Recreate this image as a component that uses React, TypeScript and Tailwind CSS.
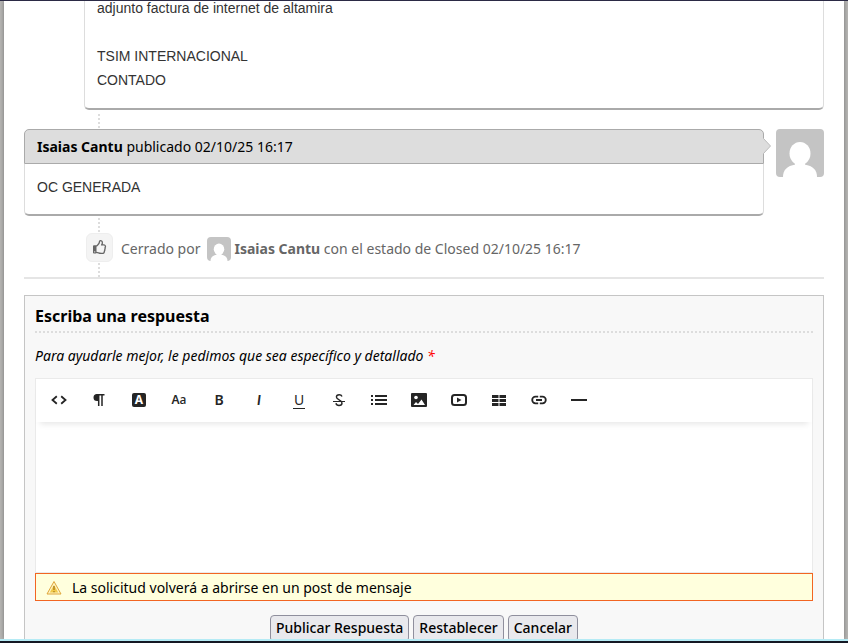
import type { ReactNode } from "react";
import { FaRegThumbsUp } from "react-icons/fa";

function Avatar({ className }: { className: string }) {
  return (
    <svg viewBox="0 0 48 48" className={className} aria-hidden="true">
      <rect width="48" height="48" fill="#c4c4c4" />
      <ellipse cx="24" cy="24.5" rx="10.5" ry="11.5" fill="#fff" />
      <path d="M7 48c0-7 4-11 12.500-12.500h9C37 37 41 41 41 48z" fill="#fff" />
      <rect x="19" y="33" width="10" height="5" fill="#fff" />
    </svg>
  );
}

function Connector() {
  return <div className="ml-[74px] h-[14px] w-0 border-l-2 border-dotted border-[#dddddd]" />;
}

const Svg = ({ children }: { children: ReactNode }) => (
  <svg viewBox="0 0 16 16" className="size-4" fill="none" stroke="currentColor" strokeWidth="2">
    {children}
  </svg>
);

const tools: { label: string; icon: ReactNode }[] = [
  { label: "HTML", icon: <Svg><path d="M5.800 4.300L1.500 8l4.300 3.700M10.200 4.300L14.500 8l-4.300 3.700" strokeWidth="1.800" /></Svg> },
  {
    label: "Formato",
    icon: (
      <Svg>
        <path d="M8 2H6a3.500 3.500 0 0 0 0 7h2z" fill="currentColor" stroke="none" />
        <path d="M5.500 2.700H13.500M7.700 2v12M11 2v12" strokeWidth="1.500" />
      </Svg>
    ),
  },
  {
    label: "Color",
    icon: <span className="flex size-[14px] items-center justify-center rounded-xs bg-[#252525] text-xs leading-none font-bold text-white">A</span>,
  },
  { label: "Fuente", icon: <span className="text-xs font-semibold">A<span className="font-medium">a</span></span> },
  { label: "Negrita", icon: <span className="text-sm font-semibold">B</span> },
  { label: "Cursiva", icon: <span className="font-['Lato',sans-serif] text-sm font-bold italic">I</span> },
  { label: "Subrayado", icon: <span className="border-b border-current px-px text-sm leading-4">U</span> },
  {
    label: "Tachado",
    icon: (
      <Svg>
        <path d="M11 4.500C10.500 3.200 9.500 2.700 8.200 2.700c-1.700 0-2.800.9-2.800 2.300 0 3.200 5.600 2.500 5.600 6 0 1.500-1.200 2.500-3 2.500-1.600 0-2.700-.7-3.100-2.200" strokeWidth="1.400" />
        <path d="M2 9.500h12" strokeWidth="1" />
      </Svg>
    ),
  },
  { label: "Lista", icon: <Svg><path d="M0 4h2M0 8h2M0 12h2M4 4h12M4 8h12M4 12h12" /></Svg> },
  {
    label: "Imagen",
    icon: (
      <Svg>
        <rect x="0" y="1" width="16" height="14" rx="1" fill="currentColor" stroke="none" />
        <circle cx="5" cy="5.500" r="1.800" fill="#fff" stroke="none" />
        <path d="M2.500 13l2.500-3 2 2 3.500-4.500L14 13z" fill="#fff" stroke="none" />
      </Svg>
    ),
  },
  {
    label: "Video",
    icon: (
      <Svg>
        <rect x="1" y="3" width="14" height="10" rx="2.500" />
        <path d="M6 5.500v5L10.500 8z" fill="currentColor" stroke="none" />
      </Svg>
    ),
  },
  { label: "Tabla", icon: <Svg><path d="M1 4.500h6.500M1 8.500h6.500M1 12.500h6.500M8.500 4.500H15M8.500 8.500H15M8.500 12.500H15" strokeWidth="3" /></Svg> },
  { label: "Enlace", icon: <Svg><path d="M7.200 4.700H4.500a3.300 3.300 0 0 0 0 6.600h2.700M8.800 4.700h2.700a3.300 3.300 0 0 1 0 6.600H8.800M5 8h6" strokeWidth="1.800" /></Svg> },
  { label: "Línea", icon: <Svg><path d="M0 8h16" /></Svg> },
];

const buttons = ["Publicar Respuesta", "Restablecer", "Cancelar"];

export default function App() {
  return (
    <div className="flex h-screen flex-col overflow-hidden border-t border-[#2b2a45] bg-[#b5b4b2] font-['Noto_Sans',sans-serif] text-sm text-black">
      <main className="mx-1 min-h-0 flex-1 overflow-hidden bg-white px-5 shadow-[0_0_4px_#777]">
        <section className="-mt-5">
          <article className="ml-[60px] rounded-[5px] border border-b-2 border-[#dddddd] border-b-[#aaaaaa] px-3 pt-3.5 pb-4 font-['Liberation_Sans',sans-serif] leading-6 text-[#333333]">
            <p>adjunto factura de internet de altamira</p>
            <br />
            <p>TSIM INTERNACIONAL</p>
            <p>CONTADO</p>
          </article>

          <div className="pt-1 pb-px">
            <Connector />
          </div>

          <div className="flex items-start gap-3">
            <article className="min-w-0 flex-1">
              <header className="relative rounded-t-[5px] border border-[#aaaaaa] bg-[#dddddd] px-3 py-1.5 leading-[21px]">
                <b>Isaias Cantu</b> publicado <time>02/10/25 16:17</time>
                <svg viewBox="0 0 8 16" className="absolute top-2 -right-2 h-4 w-2" aria-hidden="true">
                  <path d="M0 0l7.500 8L0 16z" fill="#dddddd" />
                  <path d="M.5.500l7 7.500-7 7.500" fill="none" stroke="#bbbbbb" />
                </svg>
              </header>
              <div className="rounded-b-[5px] border-x border-b-2 border-[#dddddd] border-b-[#aaaaaa] px-3 pt-[11px] pb-[15px] font-['Liberation_Sans',sans-serif] leading-6 text-[#333333]">
                OC GENERADA
              </div>
            </article>
            <Avatar className="size-12 rounded" />
          </div>

          <div className="pt-0.5 pb-px">
            <Connector />
          </div>
          <div className="ml-[62px] flex items-center text-[#666666]">
            <span className="mr-2 flex h-[29px] w-[27px] items-center justify-center rounded-md border border-[#eeeeee] bg-[#f4f4f4] pb-0.5">
              <FaRegThumbsUp className="size-[14px]" />
            </span>
            <div className="flex items-center pt-0.5">
              <span>Cerrado por</span>
              <Avatar className="mr-[3px] ml-[7px] size-6 rounded-sm" />
              <span>
                <b>Isaias Cantu</b> con el estado de Closed <time>02/10/25 16:17</time>
              </span>
            </div>
          </div>
          <div className="pt-px">
            <Connector />
          </div>
          <hr className="border-t-2 border-[#e5e5e5]" />
        </section>

        <form className="mt-4 border border-[#c5c5c5] bg-[#f8f8f8] px-2.5 pt-2.5 pb-6" onSubmit={(e) => e.preventDefault()}>
          <h2 className="border-b-2 border-dotted border-[#dddddd] pb-1 text-base leading-[21px] font-bold">Escriba una respuesta</h2>
          <label htmlFor="respuesta" className="block py-3 leading-[21px] italic">
            Para ayudarle mejor, le pedimos que sea específico y detallado <span className="text-[#ff0000]">*</span>
          </label>

          <div className="border border-[#eaeaea] bg-white">
            <div className="h-[43px] pt-px pl-[3px] text-[#252525] shadow-[0_6px_6px_-4px_#0000001a]">
              <div className="flex">
                {tools.map((tool) => (
                  <button key={tool.label} type="button" aria-label={tool.label} className="flex h-10 w-10 items-center justify-center">
                    {tool.icon}
                  </button>
                ))}
              </div>
            </div>
            <textarea id="respuesta" className="block h-[150px] w-full resize-none p-4 outline-none" />
          </div>

          <div className="flex h-7 items-center gap-2.5 border border-[#f26522] bg-[#ffffdd] px-2.5 pt-px">
            <svg viewBox="0 0 16 16" className="size-4" aria-hidden="true">
              <path d="M8 1.500L15 14H1z" fill="#fdf3c4" stroke="#e0a63a" strokeLinejoin="round" />
              <path d="M8 5l4.200 7.500H3.800z" fill="#f1c94a" />
              <path d="M8 6v4M8 11v1.200" stroke="#a87a1c" strokeWidth="1.300" />
            </svg>
            La solicitud volverá a abrirse en un post de mensaje
          </div>

          <div className="mt-3.5 flex justify-center gap-1">
            {buttons.map((label) => (
              <button key={label} className="rounded border border-[#8f8f9d] bg-[#e9e9ed] px-[5px] pt-px pb-[3px] leading-[21px] font-medium">
                {label}
              </button>
            ))}
          </div>
        </form>
      </main>
      <footer className="relative h-1 shrink-0 border-t-2 border-[#b5ebf5] bg-[#141824]" />
    </div>
  );
}
